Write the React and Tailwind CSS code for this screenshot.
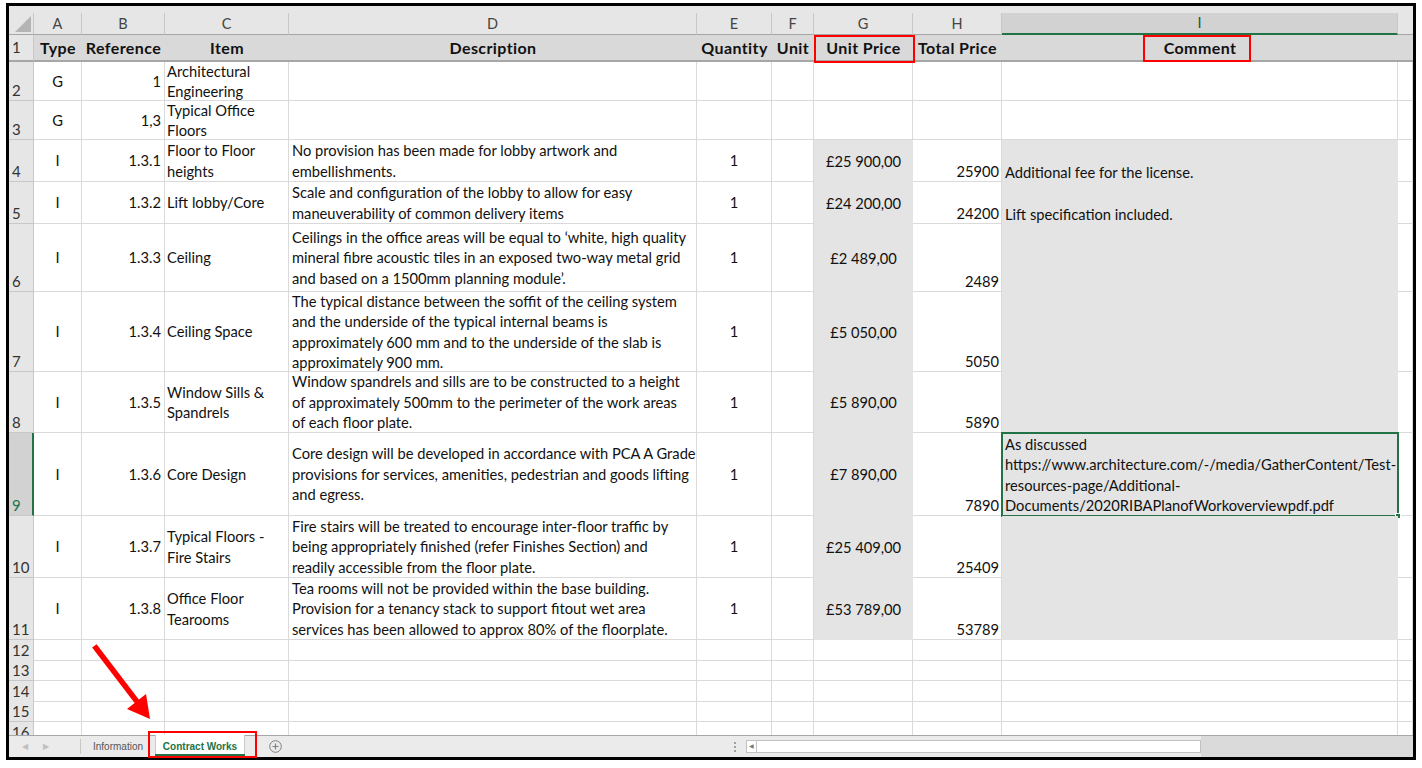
import React from "react";

const GRID = "grid grid-cols-[25px_48px_83px_124px_408px_75px_42px_99px_89px_396px_15px]";
const WB = "border-r border-b border-[#dadada]";
const FILL = "bg-[#e4e4e4]";

const data = [
  { n: 2, h: "h-[39px]", type: "G", ref: "1", item: ["Architectural", "Engineering"] },
  { n: 3, h: "h-[39px]", type: "G", ref: "1,3", item: ["Typical Office", "Floors"] },
  {
    n: 4, h: "h-[42px]", fill: true, type: "I", ref: "1.3.1", item: ["Floor to Floor", "heights"],
    desc: ["No provision has been made for lobby artwork and", "embellishments."],
    qty: "1", up: "£25 900,00", tp: "25900", comment: ["Additional fee for the license."],
  },
  {
    n: 5, h: "h-[42px]", fill: true, type: "I", ref: "1.3.2", item: ["Lift lobby/Core"],
    desc: ["Scale and configuration of the lobby to allow for easy", "maneuverability of common delivery items"],
    qty: "1", up: "£24 200,00", tp: "24200", comment: ["Lift specification included."],
  },
  {
    n: 6, h: "h-[68px]", fill: true, type: "I", ref: "1.3.3", item: ["Ceiling"],
    desc: [
      "Ceilings in the office areas will be equal to \u2018white, high quality",
      "mineral fibre acoustic tiles in an exposed two-way metal grid",
      "and based on a 1500mm planning module\u2019.",
    ],
    qty: "1", up: "£2 489,00", tp: "2489",
  },
  {
    n: 7, h: "h-[80px]", fill: true, type: "I", ref: "1.3.4", item: ["Ceiling Space"],
    desc: [
      "The typical distance between the soffit of the ceiling system",
      "and the underside of the typical internal beams is",
      "approximately 600 mm and to the underside of the slab is",
      "approximately 900 mm.",
    ],
    qty: "1", up: "£5 050,00", tp: "5050",
  },
  {
    n: 8, h: "h-[61px]", fill: true, type: "I", ref: "1.3.5", item: ["Window Sills &", "Spandrels"],
    desc: [
      "Window spandrels and sills are to be constructed to a height",
      "of approximately 500mm to the perimeter of the work areas",
      "of each floor plate.",
    ],
    qty: "1", up: "£5 890,00", tp: "5890",
  },
  {
    n: 9, h: "h-[83px]", fill: true, sel: true, type: "I", ref: "1.3.6", item: ["Core Design"],
    desc: [
      "Core design will be developed in accordance with PCA A Grade",
      "provisions for services, amenities, pedestrian and goods lifting",
      "and egress.",
    ],
    qty: "1", up: "£7 890,00", tp: "7890",
    comment: [
      "As discussed",
      "https://www.architecture.com/-/media/GatherContent/Test-",
      "resources-page/Additional-",
      "Documents/2020RIBAPlanofWorkoverviewpdf.pdf",
    ],
  },
  {
    n: 10, h: "h-[62px]", fill: true, type: "I", ref: "1.3.7", item: ["Typical Floors -", "Fire Stairs"],
    desc: [
      "Fire stairs will be treated to encourage inter-floor traffic by",
      "being appropriately finished (refer Finishes Section) and",
      "readily accessible from the floor plate.",
    ],
    qty: "1", up: "£25 409,00", tp: "25409",
  },
  {
    n: 11, h: "h-[62px]", fill: true, type: "I", ref: "1.3.8", item: ["Office Floor", "Tearooms"],
    desc: [
      "Tea rooms will not be provided within the base building.",
      "Provision for a tenancy stack to support fitout wet area",
      "services has been allowed to approx 80% of the floorplate.",
    ],
    qty: "1", up: "£53 789,00", tp: "53789",
  },
];

const empties = [
  { n: 12, h: "h-[20px]" },
  { n: 13, h: "h-[21px]" },
  { n: 14, h: "h-[20px]" },
  { n: 15, h: "h-[21px]" },
  { n: 16, h: "h-[21px]" },
];

function Lines({ lines }) {
  return (lines || []).map((l, i) => <div key={i}>{l}</div>);
}

function C({ className = "", children }) {
  return (
    <div className={`flex flex-col overflow-hidden whitespace-nowrap leading-[20.5px] ${className}`}>
      {children}
    </div>
  );
}

function RowNum({ n, sel }) {
  return (
    <div
      className={`flex flex-col justify-end pl-[3px] leading-[20px] text-[15px] border-b ${
        sel
          ? "bg-[#d2d2d2] text-[#217346] border-r-2 border-r-[#217346] border-b-[#c8c8c8]"
          : "bg-[#e6e6e6] text-[#333] border-r border-[#c8c8c8]"
      }`}
    >
      {n}
    </div>
  );
}

function DataRow({ r }) {
  const g = r.fill ? FILL : WB;
  return (
    <div className={`${GRID} ${r.h}`}>
      <RowNum n={r.n} sel={r.sel} />
      <C className={`${WB} items-center justify-center`}>{r.type}</C>
      <C className={`${WB} items-end justify-center pr-[3px]`}>{r.ref}</C>
      <C className={`${WB} items-start justify-center pl-[2px]`}>
        <Lines lines={r.item} />
      </C>
      <C className={`${WB} items-start justify-center pl-[3px]`}>
        <Lines lines={r.desc} />
      </C>
      <C className={`${WB} items-center justify-center`}>{r.qty}</C>
      <C className={`${WB}`}></C>
      <C className={`${g} items-center justify-center`}>{r.up}</C>
      <C className={`${WB} items-end justify-end pr-[2px]`}>{r.tp}</C>
      <div className={`relative ${r.fill ? FILL : WB}`}>
        <C className={`h-full items-start pl-[3px] ${r.sel ? "justify-center" : "justify-end"}`}>
          <Lines lines={r.comment} />
        </C>
        {r.sel && (
          <div className="absolute -left-px -top-px right-[-1px] bottom-[-1px] border-2 border-[#217346]">
            <div className="absolute right-[-4px] bottom-[-4px] w-[6px] h-[6px] bg-[#217346] border border-white" />
          </div>
        )}
      </div>
      <div className={WB} />
    </div>
  );
}

function EmptyRow({ r }) {
  return (
    <div className={`${GRID} ${r.h}`}>
      <RowNum n={r.n} />
      {Array.from({ length: 10 }).map((_, i) => (
        <div key={i} className={WB} />
      ))}
    </div>
  );
}

const letters = ["A", "B", "C", "D", "E", "F", "G", "H", "I"];
const heads = ["Type", "Reference", "Item", "Description", "Quantity", "Unit", "Unit Price", "Total Price", "Comment"];

export default function App() {
  return (
    <div
      className="relative w-[1422px] h-[768px] bg-white overflow-hidden pl-[6px] pt-[3px] text-[14.7px] text-[#111]"
      style={{ fontFamily: "Lato, 'Open Sans', sans-serif" }}
    >
      <div className="w-[1410px] h-[757px] border-[3px] border-black flex flex-col overflow-hidden">
        <div className="h-[729px] overflow-hidden">
          {/* column letters */}
          <div className={`${GRID} h-[29px] bg-[#e6e6e6] items-end`}>
            <div className="h-[22px] relative border-r border-b border-[#a6a6a6] border-r-[#c8c8c8]">
              <svg className="absolute right-[2px] bottom-[2px]" width="16" height="16" viewBox="0 0 16 16">
                <polygon points="16,0 16,16 0,16" fill="#b4b4b4" />
              </svg>
            </div>
            {letters.map((l) => (
              <div
                key={l}
                className={`h-[22px] flex items-center justify-center text-[14.5px] ${
                  l === "I"
                    ? "bg-[#d2d2d2] text-[#185a34] border-b-2 border-[#217346] border-r border-r-[#c8c8c8]"
                    : "text-[#444] border-r border-b border-[#c8c8c8] border-b-[#a6a6a6]"
                }`}
              >
                {l}
              </div>
            ))}
            <div className="h-[22px] border-b border-[#a6a6a6]" />
          </div>
          {/* header row 1 */}
          <div className={`${GRID} h-[27px]`}>
            <div className="flex flex-col justify-center pl-[3px] text-[15px] bg-[#e6e6e6] text-[#333] border-r border-[#c8c8c8] border-b-2 border-b-[#a6a6a6]">
              1
            </div>
            {heads.map((h) => (
              <div
                key={h}
                className="flex items-center justify-center font-bold whitespace-nowrap bg-[#d9d9d9] border-b-2 border-[#a6a6a6] text-[16px] tracking-[0.4px]"
              >
                {h}
              </div>
            ))}
            <div className="bg-[#d9d9d9] border-b-2 border-[#a6a6a6]" />
          </div>
          {data.map((r) => (
            <DataRow key={r.n} r={r} />
          ))}
          {empties.map((r) => (
            <EmptyRow key={r.n} r={r} />
          ))}
        </div>
        {/* tab bar */}
        <div
          className="h-[22px] flex items-stretch bg-[#ebebeb] border-t border-[#a6a6a6] text-[10px]"
          style={{ fontFamily: "'Liberation Sans', Arial, sans-serif" }}
        >
          <div className="w-[71px] flex items-center text-[#c0c0c0] text-[8px]">
            <span className="ml-[13px]">◀</span>
            <span className="ml-[15px]">▶</span>
          </div>
          <div className="w-px my-[3px] bg-[#c8c8c8]" />
          <div className="w-[74px] flex items-center justify-center text-[#555]">Information</div>
          <div className="w-[90px] -mt-px bg-white border-x border-[#c8c8c8] flex flex-col items-center justify-center">
            <span className="font-bold whitespace-nowrap text-[#217346] border-b-2 border-[#217346] px-[8px] pt-[3px] leading-[14px]">
              Contract Works
            </span>
          </div>
          <div className="w-[60px] flex items-center justify-center">
            <svg width="13" height="13" viewBox="0 0 13 13">
              <circle cx="6.5" cy="6.5" r="5.8" fill="none" stroke="#808080" strokeWidth="1" />
              <path d="M6.5 3.5v6M3.5 6.5h6" stroke="#808080" strokeWidth="1.2" />
            </svg>
          </div>
          <div className="w-[426px]" />
          <div className="w-[8px] flex flex-col items-center justify-center gap-[2px]">
            <div className="w-[2px] h-[2px] bg-[#a0a0a0]" />
            <div className="w-[2px] h-[2px] bg-[#a0a0a0]" />
            <div className="w-[2px] h-[2px] bg-[#a0a0a0]" />
          </div>
          <div className="w-[7px]" />
          <div className="w-[455px] my-[4px] bg-white border border-[#c2c2c2] flex">
            <div className="w-[10px] border-r border-[#c2c2c2] flex items-center justify-center text-[6px] text-[#777]">
              ◀
            </div>
          </div>
          <div className="flex-1 bg-[#dadada]" />
        </div>
      </div>

      {/* annotations */}
      <div className="absolute left-[814px] top-[35px] w-[101px] h-[28px] border-2 border-[#ff0000]" />
      <div className="absolute left-[1143px] top-[35px] w-[108px] h-[27px] border-2 border-[#ff0000]" />
      <div className="absolute left-[148px] top-[731px] w-[109px] h-[27px] border-2 border-[#ff0000]" />
      <svg className="absolute left-0 top-0 pointer-events-none" width="1422" height="768">
        <line x1="96" y1="648" x2="138" y2="703" stroke="#ff0000" strokeWidth="5.5" strokeLinecap="square" />
        <polygon points="150,719 127,709 146,694" fill="#ff0000" />
      </svg>
    </div>
  );
}
